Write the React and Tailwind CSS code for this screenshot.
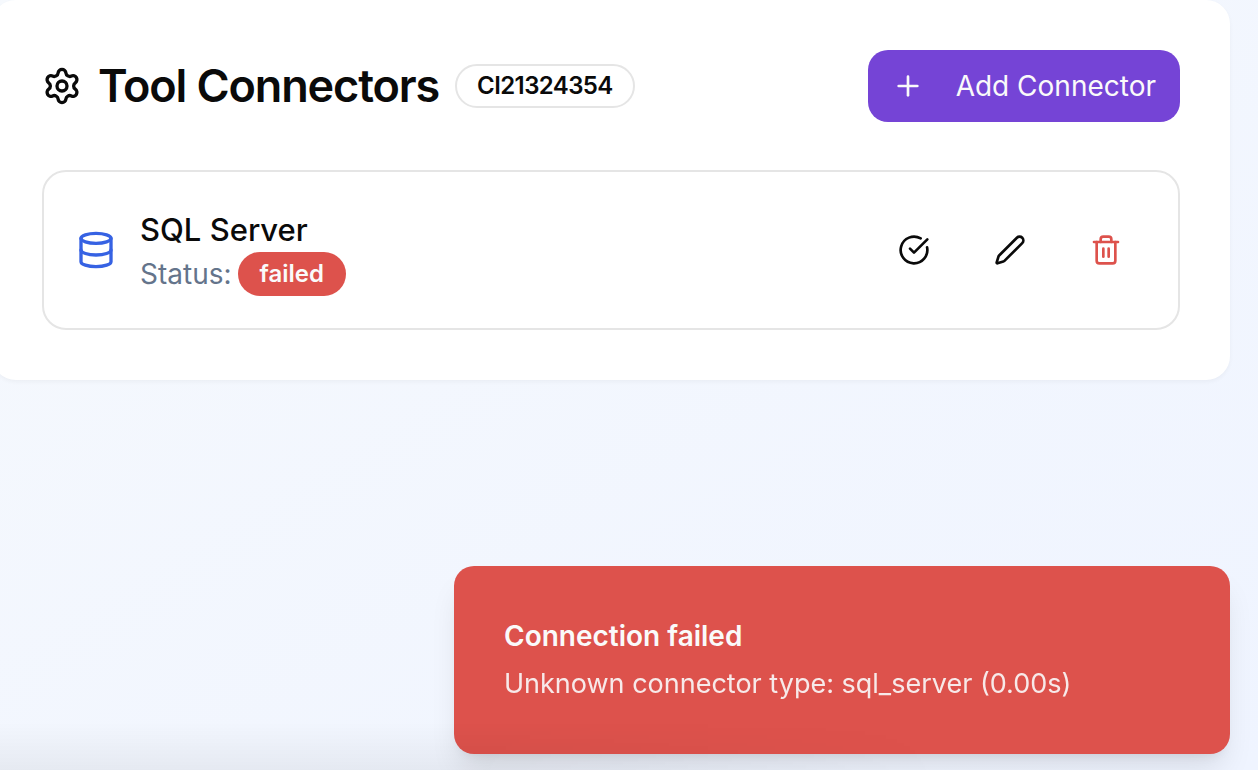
import { CircleCheckBig, Database, Pen, Plus, Settings, Trash2 } from "lucide-react";

const actions = [
  { label: "Test connection", Icon: CircleCheckBig, tone: "text-neutral-950" },
  { label: "Edit connector", Icon: Pen, tone: "text-neutral-950" },
  { label: "Delete connector", Icon: Trash2, tone: "text-[#dd524c]" },
];

function ConnectorRow({ name, status }) {
  return (
    <li className="flex items-center justify-between rounded-3xl border-2 border-[#e5e5e5] p-8">
      <div className="flex items-center gap-6">
        <Database className="size-10 text-[#3662e3]" aria-hidden="true" />
        <div>
          <h2 className="pt-1 text-[31px] leading-[44px] font-medium">{name}</h2>
          <div className="flex items-center gap-1.5 text-[28px] leading-10 text-[#64748b]">
            <span>Status:</span>
            <span className="rounded-full border-2 border-transparent bg-[#dd524c] px-5 py-1 text-2xl leading-8 font-semibold text-[#fafafa]">
              {status}
            </span>
          </div>
        </div>
      </div>
      <div className="flex items-center gap-4">
        {actions.map(({ label, Icon, tone }) => (
          <button key={label} type="button" aria-label={label} className={`rounded-[20px] px-6 py-4 ${tone}`}>
            <Icon className="size-8" aria-hidden="true" />
          </button>
        ))}
      </div>
    </li>
  );
}

export default function App() {
  return (
    <div className="relative min-h-screen overflow-hidden bg-linear-to-br from-[#f6f9fd] to-[#eff4ff] font-['Inter',sans-serif] text-neutral-950">
      <main className="mr-7 -ml-2 flex flex-col gap-12 rounded-3xl bg-white p-[50px] shadow-[0_2px_4px_rgba(0,0,0,0.04)]">
        <header className="flex items-center justify-between">
          <div className="flex items-center gap-4">
            <Settings className="size-10" aria-hidden="true" />
            <h1 className="text-[45px] leading-[48px] font-semibold tracking-tight">Tool Connectors</h1>
            <span className="rounded-full border-2 border-[#e5e5e5] px-5 py-1 text-2xl leading-8 font-semibold tracking-tight">
              CI21324354
            </span>
          </div>
          <button
            type="button"
            className="flex items-center gap-8 rounded-[20px] bg-[#7544d6] px-6 py-4 text-[28px] leading-10 text-[#fafafa]"
          >
            <Plus className="size-8" aria-hidden="true" />
            Add Connector
          </button>
        </header>
        <ul>
          <ConnectorRow name="SQL Server" status="failed" />
        </ul>
      </main>

      <div
        role="alert"
        className="absolute right-7 bottom-4 flex w-full max-w-[776px] flex-col gap-2 rounded-[20px] bg-[#dd524c] p-[50px] text-[28px] leading-10 text-[#fafafa] shadow-[0_20px_30px_-6px_rgba(0,0,0,0.1),0_8px_12px_-8px_rgba(0,0,0,0.1)]"
      >
        <p className="font-semibold">Connection failed</p>
        <p className="text-[27px] opacity-90">Unknown connector type: sql_server (0.00s)</p>
      </div>

      <div className="pointer-events-none absolute bottom-0 left-0 h-12 w-3/4 bg-linear-to-t from-black/5 to-transparent mask-r-from-50%" />
    </div>
  );
}
